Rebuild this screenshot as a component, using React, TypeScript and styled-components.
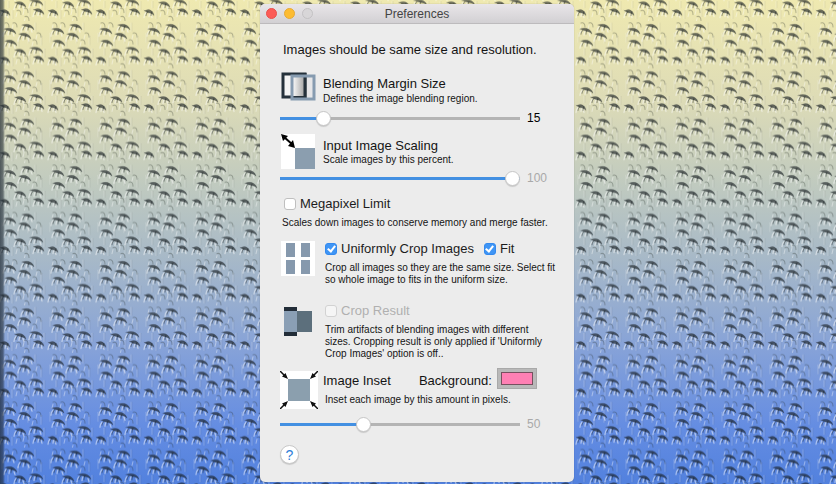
import React, { useState } from "react";
import styled, { createGlobalStyle } from "styled-components";

const GlobalStyle = createGlobalStyle`
  *, *::before, *::after { box-sizing: border-box; }
  body {
    margin: 0;
    font-family: "Liberation Sans", Helvetica, Arial, sans-serif;
    color: #141414;
  }
`;

const Desktop = styled.main`
  position: relative;
  min-height: 100vh;
  padding: 4px 2px 1px 0;
  display: flex;
  justify-content: center;
  align-items: flex-start;
  overflow: hidden;
  background: linear-gradient(
    #efe9b0 0%,
    #dedcb6 20%,
    #c0cabf 38%,
    #a6b8c8 54%,
    #86a2d8 72%,
    #658de2 88%,
    #5281de 100%
  );
`;

const WallpaperArt = styled.svg`
  position: absolute;
  inset: 0;
  width: 100%;
  height: 100%;
`;

const Window = styled.section`
  position: relative;
  width: 100%;
  max-width: 314px;
  border-radius: 5px;
  background: #ececec;
  overflow: hidden;
  box-shadow: 0 0 1px rgba(0, 0, 0, 0.4);
`;

const TitleBar = styled.header`
  display: grid;
  grid-template-columns: 60px 1fr 60px;
  align-items: center;
  height: 20px;
  background: linear-gradient(#e9e6e9, #d2d0d3);
  border-bottom: 1px solid #bdbbbd;
`;

const WindowButtons = styled.div`
  display: flex;
  gap: 7px;
  padding-left: 6px;
`;

const WindowButton = styled.button<{ $fill: string; $edge: string }>`
  width: 11px;
  height: 11px;
  padding: 0;
  border: 1px solid ${(p) => p.$edge};
  border-radius: 50%;
  background: ${(p) => p.$fill};
`;

const Title = styled.h1`
  margin: 0;
  font-size: 12px;
  line-height: 16px;
  font-weight: 400;
  text-align: center;
  color: #444;
`;

const Form = styled.form`
  display: flex;
  flex-direction: column;
  padding: 18px 20px;
`;

const Lead = styled.p`
  margin: 0 0 12px 3px;
  font-size: 13px;
  line-height: 16px;
  white-space: nowrap;
`;

const Section = styled.div<{ $height: number }>`
  display: grid;
  grid-template-columns: 38px 1fr;
  column-gap: 5px;
  align-items: start;
  min-height: ${(p) => p.$height}px;
`;

const Art = styled.svg`
  display: block;
`;

const Texts = styled.div<{ $top?: number; $left?: number }>`
  display: flex;
  flex-direction: column;
  padding: ${(p) => p.$top ?? 0}px 0 0 ${(p) => p.$left ?? 0}px;
`;

const Name = styled.label`
  font-size: 13px;
  line-height: 16px;
  white-space: nowrap;
`;

const Note = styled.p<{ $top?: number; $left?: number }>`
  margin: ${(p) => p.$top ?? 0}px 0 0 ${(p) => p.$left ?? 0}px;
  font-size: 10px;
  line-height: 12px;
  white-space: nowrap;
`;

const SliderRow = styled.div`
  display: grid;
  grid-template-columns: 240px 1fr;
  column-gap: 7px;
  align-items: center;
  height: 16px;
`;

const Range = styled.input`
  appearance: none;
  width: 100%;
  height: 16px;
  margin: 0;
  background: linear-gradient(#4390e2, #4390e2) 0 50% / var(--fill) 3px no-repeat,
    linear-gradient(#b4b4b4, #b4b4b4) 0 50% / 100% 3px no-repeat;

  &::-webkit-slider-thumb {
    appearance: none;
    width: 15px;
    height: 15px;
    border: 1px solid #c6c6c6;
    border-radius: 50%;
    background: #fff;
    box-shadow: 0 1px 1px rgba(0, 0, 0, 0.15);
  }
`;

const Value = styled.output<{ $dim?: boolean }>`
  font-size: 12px;
  line-height: 16px;
  color: ${(p) => (p.$dim ? "#a9a9a9" : "#000")};
`;

const CheckRow = styled.div`
  display: flex;
  align-items: center;
  gap: 10px;
  height: 16px;
`;

const CheckLabel = styled.label<{ $dim?: boolean }>`
  display: flex;
  align-items: center;
  gap: 4px;
  font-size: 13px;
  line-height: 16px;
  white-space: nowrap;
  color: ${(p) => (p.$dim ? "#b0b0b0" : "#1c1c1c")};
`;

const Box = styled.input`
  appearance: none;
  display: grid;
  place-items: center;
  flex: none;
  width: 12px;
  height: 12px;
  margin: 0;
  border: 1px solid #bfbfbf;
  border-radius: 3px;
  background: #fff;

  &:disabled {
    border-color: #d2d2d2;
    background: #f5f5f5;
  }

  &:checked {
    border-color: #3389ee;
    background: #3f95f5;
  }

  &:checked::after {
    content: "";
    width: 5px;
    height: 8px;
    margin-bottom: 2px;
    border: solid #fff;
    border-width: 0 2px 2px 0;
    transform: rotate(38deg);
  }
`;

const Megapixel = styled.div`
  padding: 10px 0 0 4px;
  height: 55px;
`;

const MegapixelNote = styled(Note)`
  margin-left: -2px;
`;

const InsetHead = styled.div`
  display: flex;
  align-items: flex-end;
  height: 18px;
`;

const ColorGroup = styled.div`
  display: flex;
  align-items: flex-end;
  gap: 5px;
  margin-left: 28px;
`;

const Swatch = styled.button`
  width: 40px;
  height: 21px;
  padding: 3px;
  border: 1px solid #a9a9a9;
  background: #b9b9b9;

  &::before {
    content: "";
    display: block;
    height: 100%;
    border: 1px solid #77505f;
    background: #ff80b4;
  }
`;

const HelpButton = styled.button`
  width: 19px;
  height: 19px;
  margin-top: 13px;
  padding: 0;
  border: 1px solid #c8c8c8;
  border-radius: 50%;
  background: #fff;
  box-shadow: 0 1px 1px rgba(0, 0, 0, 0.15);
  color: #2f80d8;
  font: 14px/16px "Liberation Sans", Helvetica, Arial, sans-serif;
`;

const strokes: [number, number, number][] = [
  [23, 4, 12],
  [5, 8, 12],
  [20, 13, 12],
  [6, 20, 12],
  [16, 29, 11],
  [31, 27, 13],
  [2, 37, 9],
  [35, 36, 10],
];

const faint: [number, number][] = [
  [6, 3],
  [14, 3],
  [38, 13],
  [34, 20],
  [18, 38],
  [25, 36],
  [26, 44],
];

const grain: [number, number, number][] = [
  [3, 12, 9],
  [9, 28, 6],
  [19, 19, 7],
  [29, 10, 12],
  [30, 34, 9],
  [36, 2, 8],
  [42, 15, 9],
  [45, 28, 8],
  [13, 37, 8],
];

function Wallpaper() {
  return (
    <WallpaperArt aria-hidden="true">
      <defs>
        <pattern id="relief" width="48" height="47.4" patternUnits="userSpaceOnUse" x="47" y="21">
          <g fill="none" strokeLinecap="round">
            {grain.map(([x, y, h]) => (
              <g key={`${x}-${y}`}>
                <path d={`M${x} ${y}v${h}`} stroke="#fff" strokeOpacity=".22" />
                <path d={`M${x + 1} ${y}v${h}`} stroke="#202820" strokeOpacity=".08" />
              </g>
            ))}
            {faint.map(([x, y]) => (
              <g key={`${x}-${y}`}>
                <path d={`M${x} ${y - 1}q4-1 4 4`} stroke="#202820" strokeOpacity=".3" />
                <path d={`M${x} ${y + 1}l-1 4`} stroke="#fff" strokeOpacity=".4" />
              </g>
            ))}
            {strokes.map(([x, y, w]) => (
              <g key={`${x}-${y}`}>
                <path
                  d={`M${x + 1} ${y + 2}q-2 2-2 5M${x + 5} ${y + 2}q-1 2-1 4M${x + w - 3} ${y + 4}l1 3`}
                  stroke="#fff"
                  strokeOpacity=".5"
                  strokeWidth="1.300"
                />
                <path
                  d={`M${x + 3} ${y + 1}q-2 2-2 4M${x + 7} ${y + 1}q-1 2-1 4`}
                  stroke="#161d20"
                  strokeOpacity=".45"
                />
                <path
                  d={`M${x} ${y}q${w * 0.45}-2 ${w * 0.75} .5q${w * 0.22} 1.500 ${w * 0.25} 4.500q-2-2.500-4-2.500t-${w * 0.65}-2.500z`}
                  fill="#161d20"
                  fillOpacity=".62"
                  stroke="#161d20"
                  strokeOpacity=".22"
                  strokeWidth=".8"
                />
              </g>
            ))}
          </g>
        </pattern>
        <linearGradient id="edge">
          <stop offset="0" stopColor="#1c2630" stopOpacity=".7" />
          <stop offset=".6" stopColor="#1c2630" stopOpacity=".55" />
          <stop offset="1" stopColor="#1c2630" stopOpacity="0" />
        </linearGradient>
      </defs>
      <rect width="100%" height="100%" fill="url(#relief)" />
      <rect width="5" height="100%" fill="url(#edge)" />
    </WallpaperArt>
  );
}

function BlendArt() {
  return (
    <Art width="38" height="32" viewBox="0 0 38 32" aria-hidden="true">
      <defs>
        <linearGradient id="blend">
          <stop offset="0" stopColor="#fff" />
          <stop offset="1" stopColor="#a8a8a8" />
        </linearGradient>
      </defs>
      <path d="M3 2h22v23H3z" fill="#f4f4f4" stroke="#25313b" strokeWidth="3" />
      <path d="M12 4h12v20H12z" fill="url(#blend)" />
      <path d="M25 1v25" stroke="#25313b" strokeWidth="3" />
      <path d="M27 5h6v20h-6z" fill="#e6e6e8" />
      <path d="M12 4h22v23H12z" fill="none" stroke="#869bb0" strokeWidth="3" />
    </Art>
  );
}

function ScaleArt() {
  return (
    <Art width="38" height="36" viewBox="0 0 38 36" aria-hidden="true">
      <path d="M1 0h34v35H1z" fill="#fff" />
      <path d="M15 14h20v21H15z" fill="#8b9eaf" />
      <path d="M4 3l9 8" stroke="#000" strokeWidth="2" />
      <path d="M1 0l7 2-5 5zM15 14l-7-2 5-6z" fill="#000" />
    </Art>
  );
}

function TilesArt() {
  return (
    <Art width="38" height="36" viewBox="0 0 38 36" aria-hidden="true">
      <path d="M1 0h34v35H1z" fill="#fff" />
      <path d="M6 2h9v14H6zM21 2h9v14h-9zM6 19h9v14H6zM21 19h9v14h-9z" fill="#8699ad" />
    </Art>
  );
}

function TrimArt() {
  return (
    <Art width="38" height="30" viewBox="0 0 38 30" aria-hidden="true">
      <path d="M4 0h13v29H4z" fill="#222d38" />
      <path d="M4 4h13v21H4z" fill="#8a9fb5" />
      <path d="M17 4h15v21H17z" fill="#5c6f7c" />
    </Art>
  );
}

function InsetArt() {
  return (
    <Art width="38" height="38" viewBox="0 0 38 38" aria-hidden="true">
      <path d="M0 0h38v38H0z" fill="#fff" />
      <path d="M8 8h22v22H8z" fill="#8b9fae" />
      <path
        d="M0 0l6 6M38 0l-6 6M0 38l6-6M38 38l-6-6"
        stroke="#111"
        strokeWidth="1.500"
      />
      <path
        d="M8 8L2 5.500l3.500-3.500zM30 8l6-2.500-3.500-3.500zM8 30l-6 2.500 3.500 3.500zM30 30l6 2.500-3.500 3.500z"
        fill="#111"
      />
    </Art>
  );
}

type SliderProps = { id: string; initial: number; max: number; dim?: boolean };

function Slider({ id, initial, max, dim }: SliderProps) {
  const [value, setValue] = useState(initial);
  const fill = { "--fill": `${(value / max) * 100}%` } as React.CSSProperties;
  return (
    <SliderRow>
      <Range
        id={id}
        type="range"
        min={0}
        max={max}
        value={value}
        style={fill}
        onChange={(e) => setValue(Number(e.target.value))}
      />
      <Value htmlFor={id} $dim={dim}>
        {value}
      </Value>
    </SliderRow>
  );
}

export default function App() {
  return (
    <Desktop>
      <GlobalStyle />
      <Wallpaper />
      <Window aria-labelledby="title">
        <TitleBar>
          <WindowButtons>
            <WindowButton $fill="#fc5b57" $edge="#e8504c" aria-label="Close" />
            <WindowButton $fill="#fdbc32" $edge="#e5a936" aria-label="Minimize" />
            <WindowButton $fill="#d8d6d8" $edge="#c3c1c3" aria-label="Zoom" disabled />
          </WindowButtons>
          <Title id="title">Preferences</Title>
        </TitleBar>
        <Form onSubmit={(e) => e.preventDefault()}>
          <Lead>Images should be same size and resolution.</Lead>

          <Section $height={40}>
            <Texts $top={2}>
              <BlendArt />
            </Texts>
            <Texts $top={6}>
              <Name htmlFor="margin">Blending Margin Size</Name>
              <Note $top={1}>Defines the image blending region.</Note>
            </Texts>
          </Section>
          <Slider id="margin" initial={15} max={94} />

          <Section $height={44}>
            <Texts $top={8}>
              <ScaleArt />
            </Texts>
            <Texts $top={12}>
              <Name htmlFor="scaling">Input Image Scaling</Name>
              <Note>Scale images by this percent.</Note>
            </Texts>
          </Section>
          <Slider id="scaling" initial={100} max={100} dim />

          <Megapixel>
            <CheckRow>
              <CheckLabel>
                <Box type="checkbox" />
                Megapixel Limit
              </CheckLabel>
            </CheckRow>
            <MegapixelNote as="p" $top={5} $left={-2}>
              Scales down images to conserve memory and merge faster.
            </MegapixelNote>
          </Megapixel>

          <Section $height={62}>
            <TilesArt />
            <Texts $left={2}>
              <CheckRow>
                <CheckLabel>
                  <Box type="checkbox" defaultChecked />
                  Uniformly Crop Images
                </CheckLabel>
                <CheckLabel>
                  <Box type="checkbox" defaultChecked />
                  Fit
                </CheckLabel>
              </CheckRow>
              <Note $top={5}>
                Crop all images so they are the same size. Select fit
                <br />
                so whole image to fits in the uniform size.
              </Note>
            </Texts>
          </Section>

          <Section $height={68}>
            <Texts $top={4}>
              <TrimArt />
            </Texts>
            <Texts $left={2}>
              <CheckRow>
                <CheckLabel $dim>
                  <Box type="checkbox" disabled />
                  Crop Result
                </CheckLabel>
              </CheckRow>
              <Note $top={5}>
                Trim artifacts of blending images with different
                <br />
                sizes. Cropping result is only applied if 'Uniformly
                <br />
                Crop Images' option is off..
              </Note>
            </Texts>
          </Section>

          <Section $height={45}>
            <InsetArt />
            <Texts>
              <InsetHead>
                <Name htmlFor="inset">Image Inset</Name>
                <ColorGroup>
                  <Name htmlFor="background">Background:</Name>
                  <Swatch id="background" type="button" />
                </ColorGroup>
              </InsetHead>
              <Note $top={5} $left={2}>
                Inset each image by this amount in pixels.
              </Note>
            </Texts>
          </Section>
          <Slider id="inset" initial={50} max={149} dim />

          <HelpButton type="button" aria-label="Help">
            ?
          </HelpButton>
        </Form>
      </Window>
    </Desktop>
  );
}
